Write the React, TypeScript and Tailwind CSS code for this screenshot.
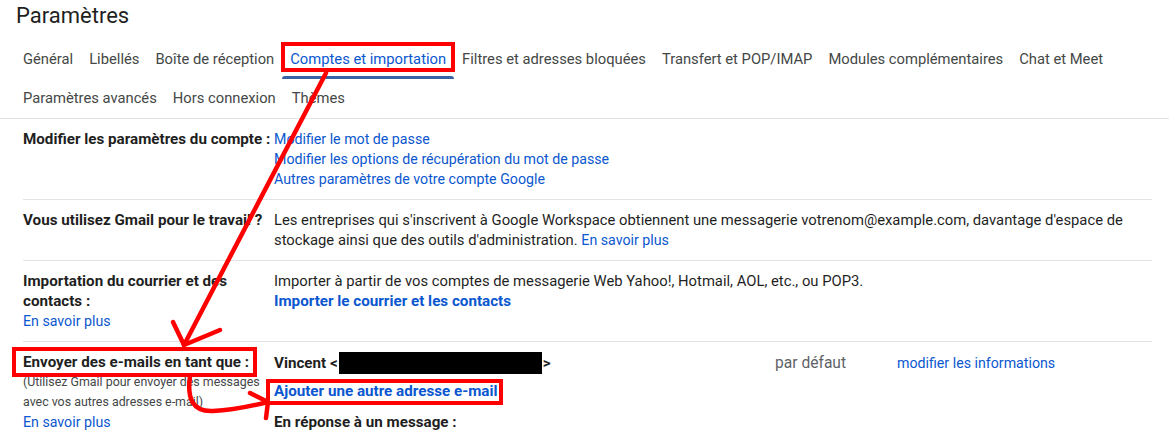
import React from 'react';

const rowOne = [
  'Général',
  'Libellés',
  'Boîte de réception',
  'Comptes et importation',
  'Filtres et adresses bloquées',
  'Transfert et POP/IMAP',
  'Modules complémentaires',
  'Chat et Meet',
];
const rowTwo = ['Paramètres avancés', 'Hors connexion', 'Thèmes'];

const ACTIVE = 'Comptes et importation';

const Tab: React.FC<{ label: string; h: string }> = ({ label, h }) => {
  const active = label === ACTIVE;
  return (
    <div className={`relative flex items-center px-2 ${h} ${active ? 'text-[#0b57d0]' : 'text-[#444746]'}`}>
      {label}
      {active && (
        <>
          <span className="absolute bottom-0 left-0 right-0 h-[3px] rounded-t-sm bg-[#3a62a6]" />
          {/* highlight box */}
          <span className="absolute -left-[1px] -right-[1px] top-[3px] bottom-[7px] border-4 border-[#f00]" />
        </>
      )}
    </div>
  );
};

const Link: React.FC<{ children: React.ReactNode; bold?: boolean }> = ({ children, bold }) => (
  <span className={`text-[#0b57d0] ${bold ? 'font-bold text-[15.2px]' : 'text-[14.2px]'}`}>{children}</span>
);

const Section: React.FC<{ label: React.ReactNode; children: React.ReactNode; last?: boolean }> = ({
  label,
  children,
  last,
}) => (
  <div className={`flex py-[10px] leading-5 ${last ? '' : 'border-b border-[#e3e3e3]'}`}>
    <div className="w-[251px] shrink-0 whitespace-nowrap">{label}</div>
    <div className="flex-1 pr-4">{children}</div>
  </div>
);

const Arrows: React.FC = () => (
  <svg className="pointer-events-none absolute left-0 top-0" width="1169" height="432" viewBox="0 0 1169 432">
    <g fill="none" stroke="#f00" strokeWidth="4.5" strokeLinecap="round" strokeLinejoin="round">
      <path d="M326 73 L184 345" />
      <path d="M173 322 L184 345 L220 330" />
      <path d="M190 376 C 187 398, 192 412, 213 411 C 235 410, 252 406, 268 402" />
      <path d="M250 393 L268 402 L266 418" />
    </g>
  </svg>
);

export default function App() {
  return (
    <div className="relative h-[432px] w-[1169px] overflow-hidden bg-white text-[14.8px] text-[#1f1f1f] font-['Roboto',sans-serif]">
      <div className="h-[39px] pl-4 pt-[2px]">
        <h1 className="text-[22px] leading-7 text-[#1f1f1f]">Paramètres</h1>
      </div>

      <div className="border-b border-[#e3e3e3] pl-[15px] text-[14.75px]">
        <div className="flex">
          {rowOne.map((t) => (
            <Tab key={t} label={t} h="h-10" />
          ))}
        </div>
        <div className="flex">
          {rowTwo.map((t) => (
            <Tab key={t} label={t} h="h-[39px]" />
          ))}
        </div>
      </div>

      <div className="ml-[23px] w-[1129px]">
        <Section label={<span className="font-bold text-[15.2px]">Modifier les paramètres du compte :</span>}>
          <div><Link>Modifier le mot de passe</Link></div>
          <div><Link>Modifier les options de récupération du mot de passe</Link></div>
          <div><Link>Autres paramètres de votre compte Google</Link></div>
        </Section>

        <Section label={<span className="font-bold text-[15.2px]">Vous utilisez Gmail pour le travail ?</span>}>
          Les entreprises qui s'inscrivent à Google Workspace obtiennent une messagerie votrenom@example.com, davantage d'espace de
          <br />
          stockage ainsi que des outils d'administration. <Link>En savoir plus</Link>
        </Section>

        <Section
          label={
            <>
              <div className="font-bold text-[15.2px]">
                Importation du courrier et des
                <br />
                contacts :
              </div>
              <Link>En savoir plus</Link>
            </>
          }
        >
          <div>Importer à partir de vos comptes de messagerie Web Yahoo!, Hotmail, AOL, etc., ou POP3.</div>
          <div><Link bold>Importer le courrier et les contacts</Link></div>
        </Section>

        <Section
          last
          label={
            <>
              <div className="relative font-bold text-[15.2px]">
                Envoyer des e-mails en tant que :
                <span className="absolute -left-[11px] -top-[5px] h-[30px] w-[245px] border-4 border-[#f00]" />
              </div>
              <div className="text-[12.4px] text-[#444746]">
                (Utilisez Gmail pour envoyer des messages
                <br />
                avec vos autres adresses e-mail)
              </div>
              <Link>En savoir plus</Link>
            </>
          }
        >
          <div className="flex items-center">
            <div className="flex w-[501px] items-center font-bold text-[15.2px]">
              Vincent &lt;
              <span className="mx-[1px] inline-block h-[22px] w-[203px] bg-black" />
              &gt;
            </div>
            <div className="w-[122px] text-[15.6px] text-[#5f6368]">par défaut</div>
            <Link>modifier les informations</Link>
          </div>
          <div className="mt-[7px]">
            <span className="relative inline-block">
              <Link bold>Ajouter une autre adresse e-mail</Link>
              <span className="absolute -left-[8px] -right-[6px] -top-[2px] -bottom-[4px] border-4 border-[#f00]" />
            </span>
          </div>
          <div className="mt-[11px] font-bold text-[15.2px]">En réponse à un message :</div>
        </Section>
      </div>

      <Arrows />
    </div>
  );
}
